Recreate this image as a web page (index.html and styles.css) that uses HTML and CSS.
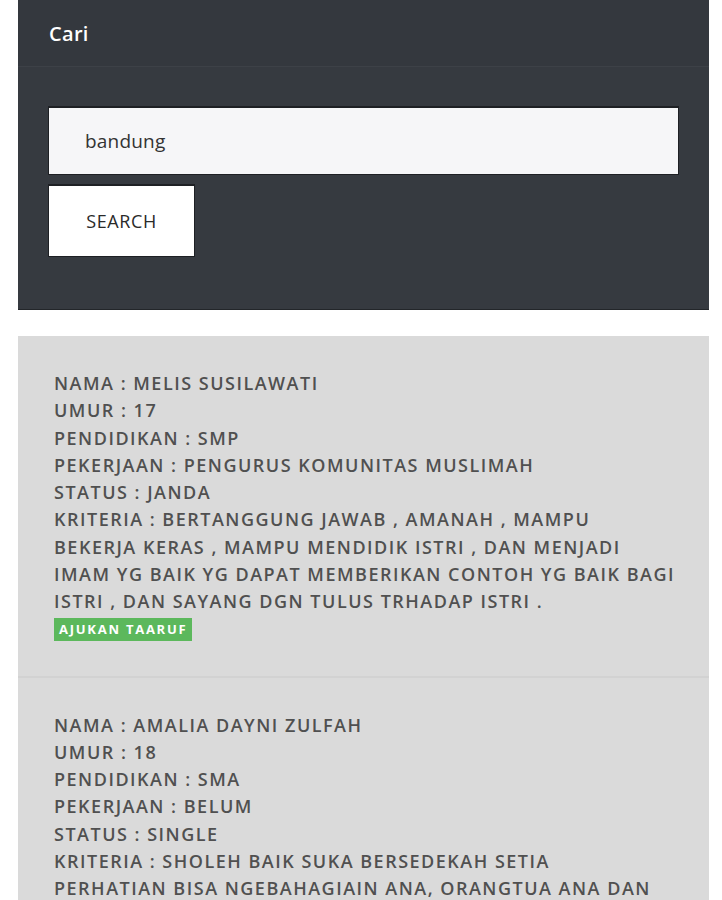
FILE: index.html
```html
<!DOCTYPE html>
<html>
<head>
<meta charset="utf-8">
<link rel="stylesheet" href="styles.css">
</head>
<body>
<div class="page">
  <section class="panel">
    <div class="panel-head">Cari</div>
    <form class="panel-body">
      <div class="field">bandung</div>
      <button type="button" class="btn">SEARCH</button>
    </form>
  </section>
  <section class="list">
    <article class="entry">
      <p>NAMA : MELIS SUSILAWATI</p>
      <p>UMUR : 17</p>
      <p>PENDIDIKAN : SMP</p>
      <p>PEKERJAAN : PENGURUS KOMUNITAS MUSLIMAH</p>
      <p>STATUS : JANDA</p>
      <p>KRITERIA : BERTANGGUNG JAWAB , AMANAH , MAMPU<br>BEKERJA KERAS , MAMPU MENDIDIK ISTRI , DAN MENJADI<br>IMAM YG BAIK YG DAPAT MEMBERIKAN CONTOH YG BAIK BAGI<br>ISTRI , DAN SAYANG DGN TULUS TRHADAP ISTRI .</p>
      <span class="badge">AJUKAN TAARUF</span>
    </article>
    <article class="entry">
      <p>NAMA : AMALIA DAYNI ZULFAH</p>
      <p>UMUR : 18</p>
      <p>PENDIDIKAN : SMA</p>
      <p>PEKERJAAN : BELUM</p>
      <p>STATUS : SINGLE</p>
      <p>KRITERIA : SHOLEH BAIK SUKA BERSEDEKAH SETIA<br>PERHATIAN BISA NGEBAHAGIAIN ANA, ORANGTUA ANA DAN</p>
    </article>
  </section>
</div>
</body>
</html>
```
FILE: styles.css
```css
* { box-sizing: border-box; }
html, body { margin: 0; padding: 0; background: #ffffff; }
body { font-family: "Open Sans", "Lato", sans-serif; }
.page { padding: 0 13px 0 18px; display: flex; flex-direction: column; gap: 26px; }
.panel { background: #363a40; border-bottom: 1px solid #23262a; }
.panel-head {
  height: 67px; padding: 0 31px; display: flex; align-items: center;
  color: #ffffff; font-size: 20px; font-weight: 600; letter-spacing: 0.3px;
  border-bottom: 1px solid #3d4147;
  background: #34383e;
}
.panel-body { padding: 39px 30px 52px; display: flex; flex-direction: column; align-items: flex-start; gap: 9px; margin: 0; }
.field {
  width: 100%; height: 69px; background: #f6f6f8;
  border: 1px solid #1e2024; border-top-width: 2px;
  display: flex; align-items: center; padding-left: 36px;
  font-size: 19px; color: #333; letter-spacing: 0.2px;
}
.btn {
  width: 147px; height: 73px; background: #ffffff; border: 1px solid #1e2024; border-top-width: 2px;
  font-family: inherit; font-size: 18px; color: #2a2a2a; letter-spacing: 0.6px; padding: 0;
}
.list { background: #dadada; }
.entry { padding: 34px 14px 33px 36px; border-bottom: 2px solid #d2d2d2; color: #505050; font-size: 18px; font-weight: 600; line-height: 27.25px; letter-spacing: 1.5px; }
.entry p { margin: 0; }
.badge {
  display: inline-block; margin-top: 3px; background: #5cb85c; color: #ffffff;
  font-size: 13px; font-weight: 700; letter-spacing: 1.75px; line-height: 17px; padding: 3px 5px;
  vertical-align: top;
}
```
